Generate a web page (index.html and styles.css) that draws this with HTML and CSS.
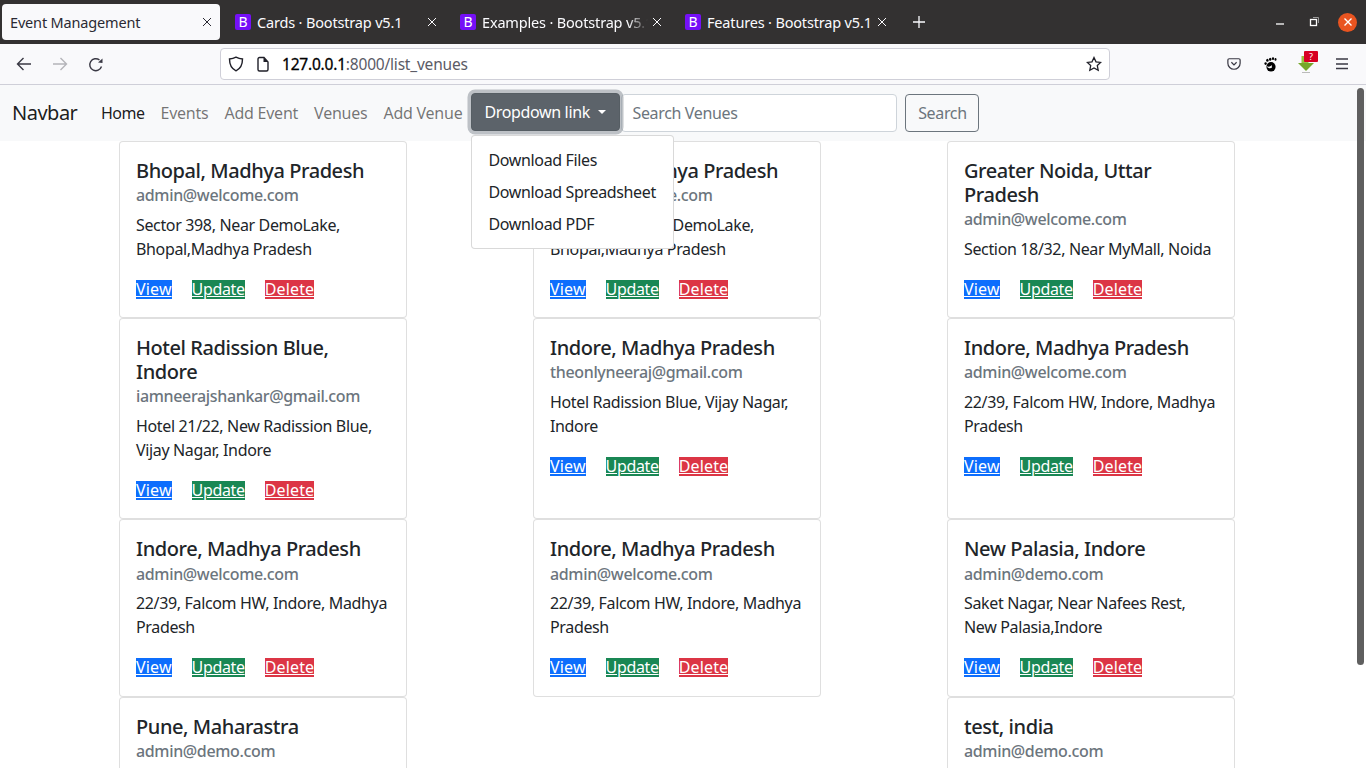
FILE: index.html
```html
<!DOCTYPE html>
<html lang="en">
<head>
<meta charset="utf-8">
<title>Event Management</title>
<link rel="stylesheet" href="styles.css">
</head>
<body>
<header class="tabbar">
  <div class="tab tab-active"><span class="tab-title">Event Management</span><svg class="tab-x" viewBox="0 0 10 10"><path d="M1 1l8 8M9 1l-8 8"/></svg></div>
  <div class="tab"><span class="favicon">B</span><span class="tab-title">Cards · Bootstrap v5.1</span><svg class="tab-x" viewBox="0 0 10 10"><path d="M1 1l8 8M9 1l-8 8"/></svg></div>
  <div class="tab"><span class="favicon">B</span><span class="tab-title tab-fade">Examples · Bootstrap v5.1</span><svg class="tab-x" viewBox="0 0 10 10"><path d="M1 1l8 8M9 1l-8 8"/></svg></div>
  <div class="tab"><span class="favicon">B</span><span class="tab-title">Features · Bootstrap v5.1</span><svg class="tab-x" viewBox="0 0 10 10"><path d="M1 1l8 8M9 1l-8 8"/></svg></div>
  <svg class="newtab" viewBox="0 0 14 14"><path d="M7 1v12M1 7h12"/></svg>
  <div class="winctl">
    <svg class="win-icon win-min" viewBox="0 0 12 12"><path d="M2 8h8"/></svg>
    <svg class="win-icon" viewBox="0 0 12 12"><rect x="2.5" y="3.5" width="6" height="6"/><path class="dim" d="M5 1.500h5.500v5.500"/></svg>
    <span class="win-close"><svg viewBox="0 0 10 10"><path d="M1.500 1.500l7 7M8.500 1.500l-7 7"/></svg></span>
  </div>
</header>
<nav class="toolbar">
  <svg class="tool tool-back" viewBox="0 0 16 16"><path d="M15 8H1.500M7.500 2L1.500 8l6 6"/></svg>
  <svg class="tool tool-fwd" viewBox="0 0 16 16"><path d="M1 8h13.500M8.500 2l6 6-6 6"/></svg>
  <svg class="tool tool-reload" viewBox="0 0 16 16"><path d="M13.500 9.500A6 6 0 1 1 11.500 3"/><path class="solid" d="M10 5.500L14.500 6V1.500z"/></svg>
  <div class="urlbar">
    <svg class="url-icon" viewBox="0 0 16 16"><path d="M8 1.200c2.200 1.200 4.500 1.700 6.500 1.800 0 5.500-1.500 9.500-6.500 11.800C3 12.500 1.500 8.500 1.500 3c2-.1 4.300-.6 6.500-1.800z"/></svg>
    <svg class="url-icon page-icon" viewBox="0 0 16 16"><path d="M3 3a1.500 1.500 0 0 1 1.500-1.500H9L13 6v7.500A1.500 1.500 0 0 1 11.500 15h-7A1.500 1.500 0 0 1 3 13.500z"/><path class="solid" d="M8.500 1.500L13 6H8.500z"/></svg>
    <span class="url"><b>127.0.0.1</b>:8000/list_venues</span>
    <svg class="url-star" viewBox="0 0 16 16"><path d="M8 1.500l2 4.300 4.700.6-3.400 3.200.9 4.700L8 12l-4.200 2.300.9-4.700L1.300 6.400 6 5.800z"/></svg>
  </div>
  <div class="tool-right">
    <svg class="tool pocket" viewBox="0 0 16 16"><path d="M2.500 2h11A1.500 1.500 0 0 1 15 3.500V7a7 7 0 0 1-14 0V3.500A1.500 1.500 0 0 1 2.500 2z"/><path d="M5 6l3 3 3-3"/></svg>
    <svg class="tool-foot" viewBox="0 0 13 15"><ellipse cx="7" cy="9.800" rx="4.600" ry="4.800"/><ellipse cx="3.400" cy="3.300" rx="1.200" ry="1.500"/><ellipse cx="6.200" cy="2.300" rx="1.200" ry="1.500"/><ellipse cx="9" cy="1.700" rx="1.100" ry="1.400"/><ellipse cx="11.500" cy="2.400" rx="1" ry="1.300"/><ellipse cx="1.600" cy="6.600" rx="1.200" ry="1.300"/><path class="foot-cut" d="M2.600 9.200c2.400.9 3.800.4 5-1.100l.4 2.400c-1.800 1.500-3.700.8-5.400-1.300z"/></svg>
    <div class="dl-wrap">
      <svg class="dl-icon" viewBox="0 0 16 17"><path class="dl-stem" d="M3.500 0h7v7h-7z"/><path class="dl-head" d="M0 7h16l-8 8z"/><path class="dl-base" d="M4 16.500h8"/></svg>
      <span class="badge">?</span>
    </div>
    <svg class="tool menu" viewBox="0 0 12 12"><path d="M0 1h12M0 6h12M0 10.500h12"/></svg>
  </div>
</nav>
<div class="viewport">
  <div class="navbar">
    <a class="brand">Navbar</a>
    <ul class="navlinks">
      <li class="navlink navlink-active">Home</li>
      <li class="navlink">Events</li>
      <li class="navlink">Add Event</li>
      <li class="navlink">Venues</li>
      <li class="navlink">Add Venue</li>
    </ul>
    <div class="dropdown">
      <button class="btn-drop">Dropdown link<i class="caret"></i></button>
      <ul class="dropmenu">
        <li>Download Files</li>
        <li>Download Spreadsheet</li>
        <li>Download PDF</li>
      </ul>
    </div>
    <form class="searchform">
      <input class="searchinput" placeholder="Search Venues">
      <button type="button" class="btn-search">Search</button>
    </form>
  </div>
  <main class="cards">
    <article class="card"><h5>Bhopal, Madhya Pradesh</h5><h6>admin@welcome.com</h6><p>Sector 398, Near DemoLake, Bhopal,Madhya Pradesh</p><div class="actions"><a class="view">View</a><a class="update">Update</a><a class="delete">Delete</a></div></article>
    <article class="card"><h5>Bhopal, Madhya Pradesh</h5><h6>admin@welcome.com</h6><p>Sector 398, Near DemoLake, Bhopal,Madhya Pradesh</p><div class="actions"><a class="view">View</a><a class="update">Update</a><a class="delete">Delete</a></div></article>
    <article class="card"><h5>Greater Noida, Uttar Pradesh</h5><h6>admin@welcome.com</h6><p>Section 18/32, Near MyMall, Noida</p><div class="actions"><a class="view">View</a><a class="update">Update</a><a class="delete">Delete</a></div></article>
    <article class="card"><h5>Hotel Radission Blue, Indore</h5><h6>iamneerajshankar@gmail.com</h6><p>Hotel 21/22, New Radission Blue, Vijay Nagar, Indore</p><div class="actions"><a class="view">View</a><a class="update">Update</a><a class="delete">Delete</a></div></article>
    <article class="card"><h5>Indore, Madhya Pradesh</h5><h6>theonlyneeraj@gmail.com</h6><p>Hotel Radission Blue, Vijay Nagar, Indore</p><div class="actions"><a class="view">View</a><a class="update">Update</a><a class="delete">Delete</a></div></article>
    <article class="card"><h5>Indore, Madhya Pradesh</h5><h6>admin@welcome.com</h6><p>22/39, Falcom HW, Indore, Madhya Pradesh</p><div class="actions"><a class="view">View</a><a class="update">Update</a><a class="delete">Delete</a></div></article>
    <article class="card"><h5>Indore, Madhya Pradesh</h5><h6>admin@welcome.com</h6><p>22/39, Falcom HW, Indore, Madhya Pradesh</p><div class="actions"><a class="view">View</a><a class="update">Update</a><a class="delete">Delete</a></div></article>
    <article class="card"><h5>Indore, Madhya Pradesh</h5><h6>admin@welcome.com</h6><p>22/39, Falcom HW, Indore, Madhya Pradesh</p><div class="actions"><a class="view">View</a><a class="update">Update</a><a class="delete">Delete</a></div></article>
    <article class="card"><h5>New Palasia, Indore</h5><h6>admin@demo.com</h6><p>Saket Nagar, Near Nafees Rest, New Palasia,Indore</p><div class="actions"><a class="view">View</a><a class="update">Update</a><a class="delete">Delete</a></div></article>
    <article class="card"><h5>Pune, Maharastra</h5><h6>admin@demo.com</h6><p>Pune</p></article>
    <div class="card-gap"></div>
    <article class="card"><h5>test, india</h5><h6>admin@demo.com</h6><p>test</p></article>
  </main>
  <div class="scrollthumb"></div>
</div>
</body>
</html>
```

FILE: styles.css
```css
* { box-sizing: border-box; }
html, body { margin: 0; height: 768px; overflow: hidden; }
body {
  font-family: "Noto Sans", "Open Sans", sans-serif;
  font-size: 16px;
  line-height: 24px;
  color: #212529;
  background: #fff;
  letter-spacing: -0.35px;
}
svg { display: block; }

/* Tab bar */
.tabbar {
  height: 44px;
  background: #333131;
  display: flex;
  align-items: center;
  padding-left: 2px;
  color: #fbfbfe;
  font-size: 14.500px;
  letter-spacing: -0.17px;
}
.tab {
  width: 225px;
  height: 36px;
  display: flex;
  align-items: center;
  padding: 0 13px 0 10px;
  flex: none;
}
.tab-active {
  width: 218px;
  background: #f9f9fb;
  color: #2b2a33;
  border-radius: 4px;
  padding: 0 8px;
  margin-right: 5px;
}
.favicon {
  width: 16px;
  height: 16px;
  border-radius: 2px;
  background: #7510f7;
  color: #fff;
  font-size: 14px;
  line-height: 16px;
  text-align: center;
  margin-right: 6px;
  flex: none;
}
.tab-title { flex: 1; white-space: nowrap; overflow: hidden; }
.tab-fade { -webkit-mask-image: linear-gradient(to right, #000 88%, transparent 100%); mask-image: linear-gradient(to right, #000 88%, transparent 100%); }
.tab-x { width: 10px; height: 10px; flex: none; margin-left: 4px; }
.tab-x path { stroke: currentColor; stroke-width: 1; fill: none; }
.newtab { width: 14px; height: 14px; margin-left: 12px; }
.newtab path { stroke: #fbfbfe; stroke-width: 1.300; fill: none; }
.winctl { margin-left: auto; display: flex; align-items: center; gap: 22px; padding-right: 9px; }
.win-icon { width: 12px; height: 12px; }
.win-icon + .win-icon { margin-right: -4px; }
.win-icon path, .win-icon rect { stroke: #fff; fill: none; stroke-width: 1.300; }
.win-icon .dim { stroke: #9a9a9a; stroke-width: 1; }
.win-close { width: 19px; height: 19px; border-radius: 50%; background: #e95420; display: flex; align-items: center; justify-content: center; }
.win-close svg { width: 10px; height: 10px; }
.win-close path { stroke: #fff; stroke-width: 1.400; fill: none; }

/* Toolbar */
.toolbar {
  height: 41px;
  background: #f9f9fb;
  border-bottom: 1px solid #cfcfd8;
  display: flex;
  align-items: center;
  padding-left: 16px;
  position: relative;
}
.tool { width: 16px; height: 16px; flex: none; fill: none; stroke: #3a3944; stroke-width: 1.400; }
.tool-fwd { margin-left: 20px; stroke: #b4b4b9; }
.tool-reload { margin-left: 20px; margin-top: 2px; }
.tool .solid { fill: #3a3944; stroke: none; }
.urlbar {
  width: 890px;
  height: 32px;
  margin-left: 116px;
  background: #fff;
  border: 1px solid #cfcfd8;
  border-radius: 4px;
  display: flex;
  align-items: center;
  padding: 0 7px;
  color: #5b5b66;
  font-size: 15.500px;
  letter-spacing: -0.2px;
}
.url-icon { width: 16px; height: 16px; flex: none; fill: none; stroke: #1f1f28; stroke-width: 1.400; }
.page-icon { margin-left: 11px; }
.page-icon .solid { fill: #1f1f28; stroke: none; }
.url { margin-left: 11px; flex: 1; }
.url b { font-weight: 400; color: #000; -webkit-text-stroke: 0.3px #000; }
.url-star { width: 16px; height: 16px; fill: none; stroke: #1f1f28; stroke-width: 1.300; }
.tool-right { position: absolute; right: 0; top: 0; bottom: 0; width: 148px; display: flex; align-items: center; }
.pocket { margin-left: 9px; width: 14px; height: 14px; }
.tool-foot { width: 13px; height: 15px; margin-left: 23px; fill: #000; }
.foot-cut { fill: #f9f9fb; }
.dl-wrap { position: relative; width: 20px; height: 20px; margin-left: 21px; }
.dl-icon { width: 16px; height: 17px; position: absolute; left: 0; top: 2px; }
.dl-stem { fill: #98c13d; }
.dl-head { fill: #76a82a; }
.dl-base { stroke: #bbb; fill: none; stroke-width: 1; }
.badge {
  position: absolute;
  left: 6px;
  top: -3px;
  width: 14px;
  height: 11px;
  background: #d70022;
  border-radius: 1px;
  color: #fff;
  font-size: 9px;
  line-height: 11px;
  text-align: center;
  letter-spacing: 0;
}
.menu { margin-left: 18px; width: 12px; height: 12px; }

/* Page */
.viewport { position: relative; height: 683px; overflow: hidden; }
.navbar {
  height: 56px;
  background: #f8f9fa;
  display: flex;
  align-items: center;
  padding: 0 12px;
}
.brand { font-size: 20px; color: rgba(0,0,0,.9); margin-right: 8px; width: 73px; letter-spacing: -0.5px; }
.navlinks { display: flex; list-style: none; margin: 0; padding: 0; letter-spacing: -0.24px; }
.navlink { padding: 8px; color: rgba(0,0,0,.55); }
.navlink-active { color: rgba(0,0,0,.9); letter-spacing: -0.5px; }
.dropdown { position: relative; margin: 0 0 2px 1px; }
.btn-drop {
  font: inherit;
  letter-spacing: inherit;
  color: #fff;
  height: 38px;
  width: 149px;
  background: #5c636a;
  border: 1px solid #565e64;
  border-radius: 4px;
  box-shadow: 0 0 0 3.500px rgba(130,138,145,.5);
  padding: 0 12px;
  display: flex;
  align-items: center;
  white-space: nowrap;
}
.caret {
  margin-left: 8px;
  border-top: 4.800px solid #fff;
  border-left: 4.800px solid transparent;
  border-right: 4.800px solid transparent;
}
.dropmenu {
  position: absolute;
  left: 0;
  top: 42px;
  width: 203px;
  height: 114px;
  margin: 0;
  padding: 8px 0;
  list-style: none;
  background: #fff;
  border: 1px solid rgba(0,0,0,.15);
  border-radius: 4px;
  z-index: 5;
}
.dropmenu li { padding: 4px 16px; white-space: nowrap; }
.searchform { display: flex; margin-left: 1px; }
.searchinput {
  width: 276px;
  height: 38px;
  font: inherit;
  letter-spacing: inherit;
  border: 1px solid #ced4da;
  border-radius: 4px;
  padding: 6px 10px;
  background: #fff;
}
.searchinput::placeholder { color: #6c757d; opacity: 1; }
.btn-search {
  margin-left: 8px;
  width: 74px;
  height: 38px;
  font: inherit;
  letter-spacing: inherit;
  color: #6c757d;
  background: transparent;
  border: 1px solid #6c757d;
  border-radius: 4px;
  padding: 0;
}
.cards {
  display: grid;
  grid-template-columns: repeat(3, 288px);
  column-gap: 126px;
  padding-left: 119px;
  grid-auto-rows: min-content;
}
.card {
  background: #fff;
  border: 1px solid rgba(0,0,0,.125);
  border-radius: 4px;
  padding: 17px 16px 16px;
}
.card h5 { margin: 0 0 3.300px; font-size: 20px; line-height: 24px; font-weight: 500; letter-spacing: -0.43px; }
.card h6 { margin: 0 0 7.400px; font-size: 16px; line-height: 19.200px; font-weight: 500; color: #6c757d; }
.card p { margin: 0 0 16.300px; line-height: 24px; }
.actions { display: flex; line-height: 19px; padding: 2.500px 0; }
.actions a { color: #fff; text-decoration: underline; }
.actions .view { background: #0d6efd; letter-spacing: 0.15px; }
.actions .update { background: #198754; margin-left: 20px; }
.actions .delete { background: #dc3545; margin-left: 20px; letter-spacing: 0.15px; }
.card-gap { visibility: hidden; }
.scrollthumb {
  position: absolute;
  top: 3px;
  right: 2px;
  width: 7px;
  height: 577px;
  border-radius: 4px;
  background: #5f5f5f;
}
```
